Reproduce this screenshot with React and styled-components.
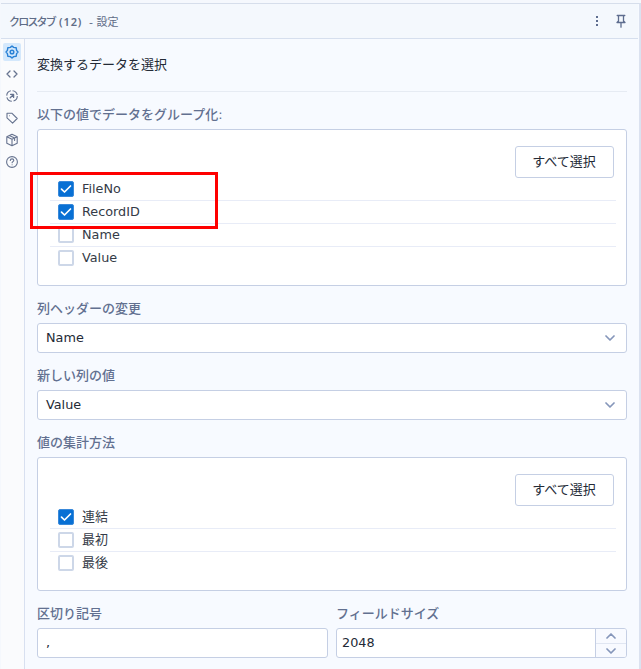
import React from "react";
import styled, { createGlobalStyle } from "styled-components";

const GlobalStyle = createGlobalStyle`
  *, *::before, *::after { box-sizing: border-box; }
  body {
    margin: 0;
    overflow: hidden;
    background: #f7faff;
    font-family: "DejaVu Sans", "Noto Sans CJK JP", sans-serif;
    font-size: 13px;
    color: #232a36;
  }
`;

const Window = styled.div`
  position: relative;
  display: flex;
  flex-direction: column;
  width: 641px;
  height: 669px;
  padding: 3px 0 0 1px;
  background: #f5f8fd;
`;

const Panel = styled.section`
  display: flex;
  flex-direction: column;
  flex: 1;
  min-height: 0;
  border-top: 1px solid #d6deeb;
  border-right: 2px solid #dbe2f0;
  background: #f7faff;
`;

const Header = styled.header`
  display: flex;
  align-items: center;
  justify-content: space-between;
  height: 35px;
  flex: none;
  margin-right: 1px;
  padding: 0 12px 0 8px;
  background: #f4f8fd;
  border-bottom: 1px solid #d6dfee;
`;

const HeaderTitle = styled.h1`
  display: flex;
  align-items: baseline;
  margin: 0;
  padding-top: 2px;
  font-size: 11px;
  line-height: 18px;
  font-weight: 400;
  color: #5f6c87;
  white-space: pre;
`;

const ToolName = styled.span`
  width: 50px;
  font-weight: 500;
  letter-spacing: -1.8px;
`;

const ToolNumber = styled.span`
  width: 30px;
  font-family: "Noto Sans", sans-serif;
  font-weight: 600;
  letter-spacing: 0.9px;
`;

const HeaderActions = styled.div`
  display: flex;
  align-items: center;
  gap: 17px;
`;

const Body = styled.div`
  display: flex;
  flex: 1;
  min-height: 0;
`;

const Sidebar = styled.nav`
  display: flex;
  flex-direction: column;
  align-items: center;
  gap: 4px;
  flex: none;
  width: 24px;
  padding: 4px 1px 0 0;
  background: #fafbfd;
  border-right: 1px solid #d8e0f0;
`;

const SideButton = styled.button`
  display: flex;
  align-items: center;
  justify-content: center;
  width: 18px;
  height: 18px;
  padding: 0;
  border: 0;
  border-radius: 2px;
  background: ${({ $active }) => ($active ? "#d4e8fc" : "transparent")};
  color: ${({ $active }) => ($active ? "#2a82d6" : "#66738f")};
`;

const Icon = styled.svg`
  display: block;
  flex: none;
  fill: none;
  stroke: currentColor;
  stroke-linecap: round;
  stroke-linejoin: round;
  color: ${({ $color }) => $color || "inherit"};
`;

const Content = styled.main`
  flex: 1;
  padding: 0 12px 0 12px;
`;

const Intro = styled.div`
  display: flex;
  align-items: center;
  height: 53px;
  padding-bottom: 4px;
  border-bottom: 1px solid #e6ebf3;
`;

const Label = styled.label`
  display: flex;
  align-items: center;
  height: 37px;
  padding-top: ${({ $first }) => ($first ? "6px" : "5px")};
  font-weight: 500;
  color: #627090;
`;

const ChecklistBox = styled.div`
  display: flex;
  flex-direction: column;
  height: ${({ $height }) => $height}px;
  padding: 16px 10px 0 12px;
  border: 1px solid #c5cfe4;
  border-radius: 3px;
  background: #fff;
`;

const SelectAll = styled.button`
  align-self: flex-end;
  width: 99px;
  height: 32px;
  flex: none;
  margin-right: 2px;
  padding: 0 1px 3px 0;
  border: 1px solid #c5cfe4;
  border-radius: 3px;
  background: #fff;
  color: #232a36;
  font: inherit;
`;

const CheckRow = styled.div`
  display: flex;
  align-items: center;
  gap: 8px;
  height: 23px;
  padding-left: 8px;
  border-bottom: 1px solid #e8ecf7;
  font-size: ${({ $latin }) => ($latin ? "12.8px" : "13px")};
  color: #343b47;

  &:last-child { border-bottom-color: transparent; }
`;

const RowText = styled.span`
  line-height: 18px;
  margin-top: -1px;
`;

const Checkbox = styled.span`
  display: flex;
  align-items: center;
  justify-content: center;
  width: 16px;
  height: 16px;
  flex: none;
  border: ${({ $checked }) => ($checked ? "1px solid #3989da" : "2px solid #cdd7e8")};
  border-radius: 2px;
  background: ${({ $checked }) => ($checked ? "#0870d4" : "#fff")};
  color: #fff;
`;

const Field = styled.div`
  display: flex;
  align-items: center;
  justify-content: space-between;
  height: 30px;
  padding: 0 11px 1px 8px;
  border: 1px solid #c5cfe4;
  border-radius: 3px;
  background: #fff;
  font-size: 12.8px;
`;

const FieldPair = styled.div`
  display: grid;
  grid-template-columns: 1fr 1fr;
  gap: 8px;
`;

const NumberField = styled(Field)`
  padding: 0 0 0 5px;
`;

const NumberValue = styled.span`
  padding-bottom: 2px;
`;

const Stepper = styled.div`
  display: grid;
  grid-template-rows: 1fr 1fr;
  width: 31px;
  height: 28px;
  border-left: 1px solid #c5cfe4;
  border-radius: 0 2px 2px 0;
  background: #f8faff;
`;

const StepButton = styled.button`
  display: flex;
  align-items: center;
  justify-content: center;
  padding: 0;
  border: 0;
  background: transparent;

  & + & { border-top: 1px solid #e0e6f2; }
`;

const Highlight = styled.div`
  position: absolute;
  left: 30px;
  top: 172px;
  width: 188px;
  height: 57px;
  border: 3px solid #fe0000;
`;

function Chevron({ up }) {
  return (
    <Icon $color="#8596ba" width="10" height="6" viewBox="0 0 10 6" strokeWidth="1.7">
      <path d={up ? "M1 5 5 1 9 5" : "M1 1 5 5 9 1"} />
    </Icon>
  );
}

function SideIcon({ children }) {
  return (
    <Icon width="14" height="14" viewBox="0 0 14 14" strokeWidth="1.1">
      {children}
    </Icon>
  );
}

function Checklist({ height, items, latin }) {
  return (
    <ChecklistBox $height={height}>
      <SelectAll>すべて選択</SelectAll>
      <div>
        {items.map(([text, checked]) => (
          <CheckRow key={text} $latin={latin}>
            <Checkbox $checked={checked}>
              {checked && (
                <Icon width="12" height="10" viewBox="0 0 12 10" strokeWidth="1.7">
                  <path d="M1.5 5.2 4.5 8 10.5 2" />
                </Icon>
              )}
            </Checkbox>
            <RowText>{text}</RowText>
          </CheckRow>
        ))}
      </div>
    </ChecklistBox>
  );
}

export default function App() {
  return (
    <Window>
      <GlobalStyle />
      <Panel>
        <Header>
          <HeaderTitle>
            <ToolName>クロスタブ</ToolName>
            <ToolNumber>(12)</ToolNumber>
            <span>- 設定</span>
          </HeaderTitle>
          <HeaderActions>
            <Icon $color="#5e6d8f" width="4" height="12" viewBox="0 0 4 12">
              <path d="M1 1h2v2H1zM1 5h2v2H1zM1 9h2v2H1z" fill="currentColor" stroke="none" />
            </Icon>
            <Icon $color="#5e6d8f" width="10" height="14" viewBox="0 0 10 14" strokeWidth="1.3">
              <path d="M1.2 1.5h7.6M2.5 1.5v6M7.5 1.5v6M1 8.5h8M2.5 7 1 8.5M7.5 7 9 8.5M5 8.5v4.7" />
            </Icon>
          </HeaderActions>
        </Header>
        <Body>
          <Sidebar>
            <SideButton $active aria-label="設定">
              <SideIcon>
                <path
                  strokeWidth="1.4"
                  d="M7 1 8.6 2.4 11.2 2.8 11.6 5.4 13 7 11.6 8.6 11.2 11.2 8.6 11.6 7 13 5.4 11.6 2.8 11.2 2.4 8.6 1 7 2.4 5.4 2.8 2.8 5.4 2.4Z"
                />
                <circle cx="7" cy="7" r="1.8" strokeWidth="1.5" />
              </SideIcon>
            </SideButton>
            <SideButton aria-label="XML">
              <SideIcon>
                <path strokeWidth="1.3" d="M5 4 2 7 5 10M9 4 12 7 9 10" />
              </SideIcon>
            </SideButton>
            <SideButton aria-label="ナビゲーション">
              <SideIcon>
                <circle cx="7" cy="7" r="5.3" strokeDasharray="6.5 1.8" strokeLinecap="butt" />
                <path d="M5.2 8.8 8.3 5.7M5.6 5.4h3v3" strokeWidth="1.3" />
              </SideIcon>
            </SideButton>
            <SideButton aria-label="注釈">
              <SideIcon>
                <path d="M2 2.2h4.8L12.2 7.5 7.6 12.1 2 6.8Z" />
                <circle cx="4.5" cy="4.7" r=".5" fill="currentColor" stroke="none" />
              </SideIcon>
            </SideButton>
            <SideButton aria-label="パッケージ">
              <SideIcon>
                <path d="M7 1.3 12.2 3.8v6.4L7 12.7 1.8 10.2V3.8ZM1.8 3.8 7 6.3l5.2-2.5M7 6.3v6.4M4.3 2.6 9.6 5.1v2.4" />
              </SideIcon>
            </SideButton>
            <SideButton aria-label="ヘルプ">
              <SideIcon>
                <circle cx="7" cy="7" r="5.4" />
                <path d="M5.3 5.5c0-2.2 3.5-2.1 3.5-.1 0 1.2-1.7 1.3-1.7 2.4M7.1 9.7v.1" />
              </SideIcon>
            </SideButton>
          </Sidebar>
          <Content>
            <Intro>変換するデータを選択</Intro>
            <Label $first>以下の値でデータをグループ化:</Label>
            <Checklist
              height={157}
              latin
              items={[["FileNo", true], ["RecordID", true], ["Name", false], ["Value", false]]}
            />
            <Label>列ヘッダーの変更</Label>
            <Field>
              Name
              <Chevron />
            </Field>
            <Label>新しい列の値</Label>
            <Field>
              Value
              <Chevron />
            </Field>
            <Label>値の集計方法</Label>
            <Checklist
              height={134}
              items={[["連結", true], ["最初", false], ["最後", false]]}
            />
            <FieldPair>
              <div>
                <Label>区切り記号</Label>
                <Field>,</Field>
              </div>
              <div>
                <Label>フィールドサイズ</Label>
                <NumberField>
                  <NumberValue>2048</NumberValue>
                  <Stepper>
                    <StepButton aria-label="増やす"><Chevron up /></StepButton>
                    <StepButton aria-label="減らす"><Chevron /></StepButton>
                  </Stepper>
                </NumberField>
              </div>
            </FieldPair>
          </Content>
        </Body>
      </Panel>
      <Highlight />
    </Window>
  );
}
